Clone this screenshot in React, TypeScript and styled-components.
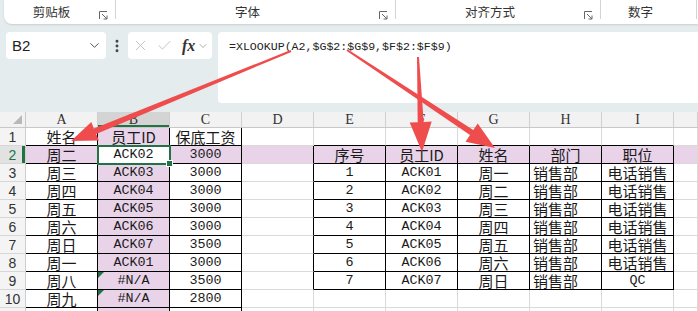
import React from 'react';
import styled, { createGlobalStyle } from 'styled-components';
import { ChevronDown, X, Check, EllipsisVertical } from 'lucide-react';

const GREEN = '#217346';
const PURPLE = '#e8d3e9';
const GRID = '#d9d9d9';
const INK = '#1a1a1a';
const RED = '#ef4d4d';

const GlobalStyle = createGlobalStyle`
  body {
    margin: 0;
    background: #e4ecee;
  }
`;

const Root = styled.div`
  position: relative;
  width: 698px;
  height: 311px;
  overflow: hidden;
  background: #e4ecee;
  font-family: "Noto Sans CJK SC", sans-serif;
`;

const Ribbon = styled.div`
  display: flex;
  height: 24px;
  margin-left: 4px;
  background: #fff;
  border-bottom-left-radius: 8px;
  box-shadow: 0 1px 2px rgba(0, 0, 0, 0.12);
`;

const Group = styled.div<{ $w: number }>`
  display: flex;
  align-items: center;
  flex: none;
  width: ${({ $w }) => $w}px;
  height: 100%;
  box-sizing: border-box;
  border-right: 1px solid #d4d4d4;
  border-image: linear-gradient(#d4d4d4 0 18px, transparent 18px) 1;
`;

const GroupLabel = styled.div`
  flex: 1;
  text-align: center;
  font-size: 12.5px;
  line-height: 24px;
  color: #333;
`;

const Launcher = styled.div`
  flex: none;
  width: 16px;
  display: flex;
  align-items: flex-end;
  padding-top: 6px;
  color: #666;
`;

const FormulaBar = styled.div`
  display: flex;
  align-items: flex-start;
  height: 88px;
  padding: 8px 0 0 6px;
  box-sizing: border-box;
`;

const NameBox = styled.div`
  display: flex;
  align-items: center;
  justify-content: space-between;
  width: 100px;
  height: 27px;
  padding: 0 4px 0 6px;
  box-sizing: border-box;
  background: #fff;
  border-radius: 4px;
  font-family: "Liberation Sans", sans-serif;
  font-size: 15px;
  color: #222;
`;

const Dots = styled.div`
  display: flex;
  align-items: center;
  justify-content: center;
  width: 22px;
  height: 27px;
  color: #444;
`;

const FxBox = styled.div`
  display: flex;
  align-items: center;
  width: 84px;
  height: 27px;
  padding-left: 4px;
  box-sizing: border-box;
  background: #fff;
  border-radius: 4px;
  color: #b9b9b9;
`;

const Fx = styled.span`
  margin: 0 2px 0 9px;
  font-family: "Liberation Serif", serif;
  font-style: italic;
  font-weight: 700;
  font-size: 16px;
  color: #333;
`;

const FormulaBox = styled.div`
  flex: 1;
  height: 71px;
  margin-left: 6px;
  padding: 8px 0 0 11px;
  box-sizing: border-box;
  background: #fff;
  border-radius: 4px 0 0 4px;
  font-family: "Liberation Mono", monospace;
  font-size: 11.6px;
  line-height: 14px;
  color: #222;
`;

const Sheet = styled.div`
  display: grid;
  grid-template-columns: 26px repeat(9, 72px) 1fr;
  grid-template-rows: 16px;
  grid-auto-rows: 18px;
  background: #fff;
`;

const Corner = styled.div`
  display: flex;
  align-items: flex-end;
  justify-content: flex-end;
  padding: 0 3px 3px 0;
  background: #f2f2f2;
  border-right: 1px solid #c8c8c8;
  border-bottom: 1px solid #c8c8c8;
`;

const ColHead = styled.div<{ $active?: boolean }>`
  display: flex;
  align-items: center;
  justify-content: center;
  background: ${({ $active }) => ($active ? '#d4d4d4' : '#f2f2f2')};
  border-right: 1px solid #cfcfcf;
  border-bottom: 1px solid #c8c8c8;
  box-shadow: ${({ $active }) => ($active ? `inset 0 -2px 0 ${GREEN}` : 'none')};
  font-family: "Liberation Serif", serif;
  font-size: 14px;
  color: #333;
`;

const RowHead = styled.div<{ $active?: boolean }>`
  display: flex;
  align-items: center;
  justify-content: center;
  background: ${({ $active }) => ($active ? '#e2e2e2' : '#f4f4f4')};
  border-right: 1px solid #cfcfcf;
  border-bottom: 1px solid #d6d6d6;
  box-shadow: ${({ $active }) => ($active ? `inset -3px 0 0 ${GREEN}` : 'none')};
  font-family: "Liberation Sans", sans-serif;
  font-size: 14px;
  line-height: 16px;
  color: ${({ $active }) => ($active ? GREEN : '#333')};
`;

const Cell = styled.div<{ $bg: string; $r: string; $b: string; $left?: boolean; $selected?: boolean }>`
  position: relative;
  z-index: ${({ $selected }) => ($selected ? 2 : 'auto')};
  display: flex;
  align-items: center;
  justify-content: ${({ $left }) => ($left ? 'flex-start' : 'center')};
  padding: 0 3px;
  box-sizing: border-box;
  background: ${({ $bg }) => $bg};
  border-right: 1px solid ${({ $r }) => $r};
  border-bottom: 1px solid ${({ $b }) => $b};
  font-size: 15px;
  line-height: 16px;
  color: ${INK};
  white-space: nowrap;
`;

const Latin = styled.span`
  font-family: "Liberation Mono", monospace;
  font-size: 13.4px;
`;

const Selection = styled.div`
  position: absolute;
  top: -1px;
  left: -1px;
  right: -2px;
  bottom: -2px;
  border: 2px solid ${GREEN};
  pointer-events: none;
  &::after {
    content: '';
    position: absolute;
    right: -4px;
    bottom: -4px;
    width: 5px;
    height: 5px;
    background: ${GREEN};
    border: 1px solid #fff;
  }
`;

const ErrorMark = styled.div`
  position: absolute;
  top: 0;
  left: 0;
  border-top: 6px solid ${GREEN};
  border-right: 6px solid transparent;
`;

const Overlay = styled.svg`
  position: absolute;
  top: 0;
  left: 0;
  pointer-events: none;
`;

const COLS = ['A', 'B', 'C', 'D', 'E', 'F', 'G', 'H', 'I', ''];

const LEFT: Record<number, string[]> = {
  1: ['姓名', '员工ID', '保底工资'],
  2: ['周二', 'ACK02', '3000'],
  3: ['周三', 'ACK03', '3000'],
  4: ['周四', 'ACK04', '3000'],
  5: ['周五', 'ACK05', '3000'],
  6: ['周六', 'ACK06', '3000'],
  7: ['周日', 'ACK07', '3500'],
  8: ['周一', 'ACK01', '3000'],
  9: ['周八', '#N/A', '3500'],
  10: ['周九', '#N/A', '2800'],
};

const RIGHT: Record<number, string[]> = {
  2: ['序号', '员工ID', '姓名', '部门', '职位'],
  3: ['1', 'ACK01', '周一', '销售部', '电话销售'],
  4: ['2', 'ACK02', '周二', '销售部', '电话销售'],
  5: ['3', 'ACK03', '周三', '销售部', '电话销售'],
  6: ['4', 'ACK04', '周四', '销售部', '电话销售'],
  7: ['5', 'ACK05', '周五', '销售部', '电话销售'],
  8: ['6', 'ACK06', '周六', '销售部', '电话销售'],
  9: ['7', 'ACK07', '周日', '销售部', 'QC'],
};

// row 11 only peeks in at the bottom edge, so it gets no label
const ROWS = [1, 2, 3, 4, 5, 6, 7, 8, 9, 10, 11];

function textAt(r: number, c: number) {
  if (c <= 2) return LEFT[r]?.[c] ?? '';
  if (c >= 4 && c <= 8) return RIGHT[r]?.[c - 4] ?? '';
  return '';
}

const inLeft = (r: number, c: number) => c <= 2 && r >= 1;
const inRight = (r: number, c: number) => c >= 4 && c <= 8 && r >= 2 && r <= 9;

function rightBorder(r: number, c: number) {
  if (inLeft(r, c) || inRight(r, c)) return '#000';
  if (c === 3 && r >= 2 && r <= 9) return '#000';
  return GRID;
}

function bottomBorder(r: number, c: number) {
  if (inLeft(r, c) || inRight(r, c)) return '#000';
  if (c >= 4 && c <= 8 && r === 1) return '#000';
  return GRID;
}

function bgAt(r: number, c: number) {
  if (r === 2 && c === 1) return '#fff';
  if (r === 2) return PURPLE;
  if (c === 1) return PURPLE;
  return '#fff';
}

const LauncherIcon = () => (
  <svg width="9" height="9" viewBox="0 0 9 9" fill="none" stroke="currentColor" strokeWidth="1">
    <path d="M0.5 8V0.5H8" />
    <path d="M3 3L8 8M8 4.5V8H4.5" />
  </svg>
);

type Pt = [number, number];

function arrow(s: Pt, t: Pt, w1: number, w2: number, len: number, hw: number) {
  const dx = t[0] - s[0];
  const dy = t[1] - s[1];
  const d = Math.hypot(dx, dy);
  const ux = dx / d;
  const uy = dy / d;
  const px = -uy;
  const py = ux;
  const b: Pt = [t[0] - ux * len, t[1] - uy * len];
  const pts: Pt[] = [
    [s[0] + (px * w1) / 2, s[1] + (py * w1) / 2],
    [b[0] + (px * w2) / 2, b[1] + (py * w2) / 2],
    [b[0] + px * hw, b[1] + py * hw],
    t,
    [b[0] - px * hw, b[1] - py * hw],
    [b[0] - (px * w2) / 2, b[1] - (py * w2) / 2],
    [s[0] - (px * w1) / 2, s[1] - (py * w1) / 2],
  ];
  return pts.map((p) => p.map((v) => v.toFixed(1)).join(',')).join(' ');
}

const GROUPS = [
  { label: '剪贴板', w: 112 },
  { label: '字体', w: 280 },
  { label: '对齐方式', w: 205 },
  { label: '数字', w: 96 },
];

export default function App() {
  return (
    <Root>
      <GlobalStyle />
      <Ribbon>
        {GROUPS.map((g) => (
          <Group key={g.label} $w={g.w}>
            <GroupLabel>{g.label}</GroupLabel>
            <Launcher>{g.label !== '数字' && <LauncherIcon />}</Launcher>
          </Group>
        ))}
      </Ribbon>

      <FormulaBar>
        <NameBox>
          <span>B2</span>
          <ChevronDown size={15} strokeWidth={1.6} color="#555" />
        </NameBox>
        <Dots>
          <EllipsisVertical size={16} strokeWidth={2.4} />
        </Dots>
        <FxBox>
          <X size={17} strokeWidth={1.2} />
          <Check size={17} strokeWidth={1.2} style={{ marginLeft: 7 }} />
          <Fx>fx</Fx>
          <ChevronDown size={12} strokeWidth={1.4} color="#888" />
        </FxBox>
        <FormulaBox>=XLOOKUP(A2,$G$2:$G$9,$F$2:$F$9)</FormulaBox>
      </FormulaBar>

      <Sheet>
        <Corner>
          <svg width="9" height="9" viewBox="0 0 9 9">
            <path d="M9 0V9H0Z" fill="#b8b8b8" />
          </svg>
        </Corner>
        {COLS.map((c, i) => (
          <ColHead key={i} $active={c === 'B'}>
            {c}
          </ColHead>
        ))}
        {ROWS.map((r) => (
          <React.Fragment key={r}>
            <RowHead $active={r === 2}>{r <= 10 ? r : ''}</RowHead>
            {COLS.map((_, c) => {
              const t = textAt(r, c);
              const latin = /^[\x20-\x7e]+$/.test(t);
              return (
                <Cell
                  key={c}
                  $bg={bgAt(r, c)}
                  $r={rightBorder(r, c)}
                  $b={bottomBorder(r, c)}
                  $left={c === 7 && r >= 3 && r <= 9}
                  $selected={r === 2 && c === 1}
                >
                  {latin ? <Latin>{t}</Latin> : t}
                  {r === 2 && c === 1 && <Selection />}
                  {c === 1 && (r === 9 || r === 10) && <ErrorMark />}
                </Cell>
              );
            })}
          </React.Fragment>
        ))}
      </Sheet>

      <Overlay width="698" height="311" viewBox="0 0 698 311">
        <polygon fill={RED} points={arrow([291, 51], [71, 141], 2, 6, 26, 10)} />
        <polygon fill={RED} points={arrow([347, 50], [495, 148], 2, 6, 28, 11)} />
        <polygon fill={RED} points={arrow([418, 57], [422, 152], 2, 6, 30, 11)} />
      </Overlay>
    </Root>
  );
}
